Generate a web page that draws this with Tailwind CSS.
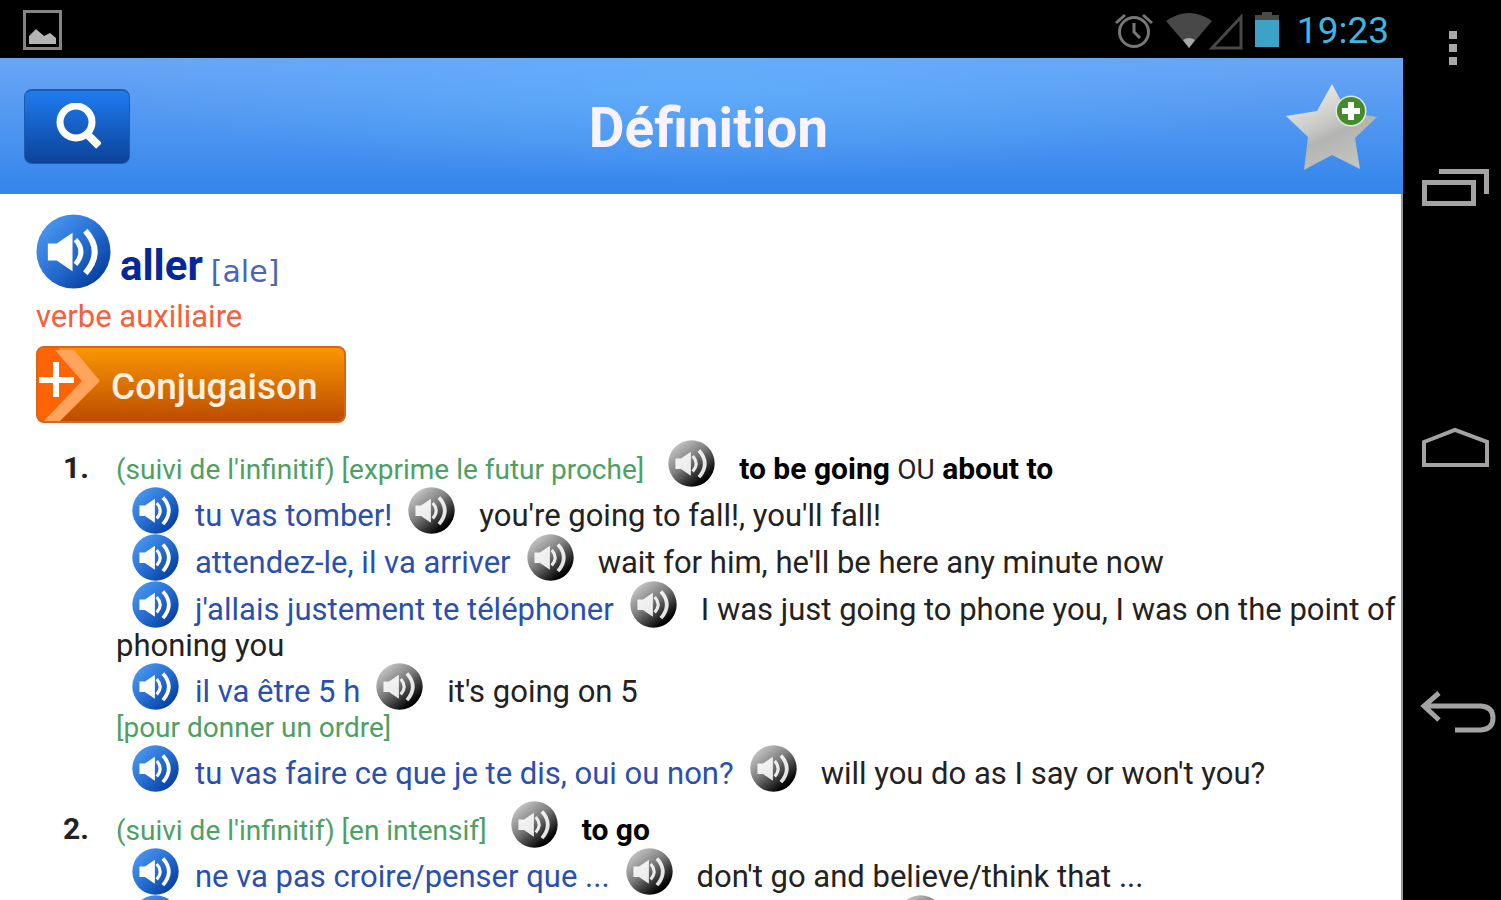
<!DOCTYPE html>
<html lang="fr">
<head>
<meta charset="utf-8">
<title>Définition</title>
<script src="https://cdn.jsdelivr.net/npm/@tailwindcss/browser@4"></script>
</head>
<body class="flex h-screen overflow-hidden bg-black font-['Roboto',sans-serif]">
<svg width="0" height="0" class="absolute" aria-hidden="true">
  <defs>
    <linearGradient id="blue" x1="0.1" y1="0.1" x2="0.9" y2="0.9"><stop offset="0" stop-color="#4a98f0"/><stop offset="0.45" stop-color="#2a72d6"/><stop offset="1" stop-color="#023c9c"/></linearGradient>
    <linearGradient id="gray" x1="0.15" y1="0.1" x2="0.8" y2="0.9"><stop offset="0" stop-color="#c6c6c6"/><stop offset="0.45" stop-color="#7c7c7c"/><stop offset="0.95" stop-color="#000"/></linearGradient>
    <linearGradient id="silver" x1="0.2" y1="0" x2="0.7" y2="1"><stop offset="0" stop-color="#f2f2ee"/><stop offset="0.45" stop-color="#c8c8c6"/><stop offset="0.6" stop-color="#b4b4b2"/><stop offset="1" stop-color="#c4c4c0"/></linearGradient>
    <symbol id="waves" viewBox="0 0 76 76">
      <path d="M12 30h9l16-11v39L21 47h-9z" fill="#fff"/>
      <path d="M40 26q11 12 0 25" fill="none" stroke="#fff" stroke-width="5"/>
      <path d="M50 17q19 21 0 43" fill="none" stroke="#fff" stroke-width="6"/>
    </symbol>
    <symbol id="say-blue" viewBox="0 0 76 76"><circle cx="38" cy="38" r="37.5" fill="url(#blue)"/><use href="#waves"/></symbol>
    <symbol id="say-gray" viewBox="0 0 76 76"><circle cx="38" cy="38" r="37.5" fill="url(#gray)"/><use href="#waves" opacity="0.88"/></symbol>
  </defs>
</svg>

<div class="flex min-w-0 flex-1 flex-col">
  <div class="flex h-[58px] shrink-0 items-center bg-black pt-1 pr-[14px] pl-[22px]">
    <svg class="size-[42px]" viewBox="0 0 42 42"><rect x="2.500" y="1.500" width="36" height="37" fill="none" stroke="#858585" stroke-width="3"/><path d="M7 34v-8l7-7 8 7 6-3 6 5v6z" fill="#b4b4b4"/></svg>
    <svg class="ml-auto h-10 w-[40px]" viewBox="0 0 40 40" fill="none" stroke="#777" stroke-width="3"><circle cx="20" cy="21" r="14.500"/><path d="M20 12v9l6 6M2 12l9-8M38 12l-9-8"/></svg>
    <svg class="ml-3 h-10 w-[80px]" viewBox="0 0 80 40"><path d="M0 10q23-16 46 0L23 37z" fill="#484848"/><path d="M17 29q6-4 12 0l-6 8z" fill="#a8a8a8"/><path d="M46 37L75 6v31z" fill="none" stroke="#484848" stroke-width="3"/></svg>
    <svg class="ml-[9px] h-10 w-6" viewBox="0 0 24 40"><path d="M0 9V4h7V1h10v3h7v5z" fill="#4a4a4a"/><path d="M0 9h24v27H0z" fill="#3da2c8"/></svg>
    <time class="ml-[18px] text-[37px] leading-10 text-[#3fb5e2]">19:23</time>
  </div>

  <header class="grid h-[136px] shrink-0 grid-cols-[1fr_auto_1fr] items-center bg-[radial-gradient(ellipse_at_50%_20%,#62b4ff99,transparent_60%),linear-gradient(#69a6f5,#3385ec)] pr-[26px] pl-6">
    <button aria-label="Rechercher" class="flex h-[75px] w-[106px] items-center justify-center justify-self-start rounded-lg border border-t-2 border-[#1c5cae] bg-linear-to-b from-[#1f7cf0] to-[#0d439a]">
      <svg class="size-12" viewBox="0 0 48 48" fill="none" stroke="#fff"><circle cx="23" cy="19" r="16" stroke-width="7"/><path d="M33 30l13 13" stroke-width="8"/></svg>
    </button>
    <h1 class="pt-1 pl-4 text-[55px] leading-16 font-bold text-[#faf3ff]">Définition</h1>
    <button aria-label="Ajouter aux favoris" class="justify-self-end">
      <svg class="h-[90px] w-[92px]" viewBox="0 0 92 90"><path d="M47 3l15 28 30 5-22 21 5 31-28-14-28 15 4-33L1 35l31-5z" fill="url(#silver)"/><circle cx="66" cy="30" r="15.500" fill="#e2eadf"/><circle cx="66" cy="30" r="14" fill="#458b2c"/><path d="M66 21v18M57 30h18" stroke="#fff" stroke-width="6"/></svg>
    </button>
  </header>

  <main class="min-h-0 flex-1 overflow-hidden border-r-2 border-[#999] bg-white pt-5 pl-9 text-[31px] leading-[35px] text-[#222]">
    <div class="flex items-start">
      <button aria-label="Écouter aller"><svg class="size-[75px]"><use href="#say-blue"/></svg></button>
      <h2 class="ml-[9px] pt-7 text-[42px] leading-12 font-bold text-[#06279a]">aller</h2>
      <span class="ml-2 pt-10 font-['DejaVu_Sans',sans-serif] text-[30px] text-[#4a66b4]">[ale]</span>
    </div>
    <p class="mt-[9px] text-[#f4603c]">verbe auxiliaire</p>
    <button class="mt-3 flex h-[77px] w-[310px] items-center overflow-hidden rounded-lg border-2 border-[#d9641c] bg-linear-to-b from-[#fa9600] to-[#bd4c00] text-[37px] font-medium text-[#fff0e2]">
      <svg class="h-[77px] w-[64px] shrink-0" viewBox="0 0 64 77"><path d="M0 0h19l26 36L6 77H0z" fill="#fe6304"/><path d="M17 4h19l26 31-42 42H4l40-42z" fill="#ffa45c"/><path d="M18 16v35M1 34h35" stroke="#fff" stroke-width="6"/></svg>
      <span class="ml-[9px] pt-1">Conjugaison</span>
    </button>

    <ol class="mt-[17px] flex flex-col gap-[9px]">
      <li class="grid grid-cols-[53px_1fr] gap-x-[27px]">
        <span class="pt-[10px] text-right text-[30px] font-bold">1.</span>
        <div>
          <p><span class="text-[28px] text-[#4da062]">(suivi de l'infinitif) [exprime le futur proche]</span><button aria-label="Écouter" class="mr-6 ml-6 inline-block align-[-8px]"><svg class="size-[47px]"><use href="#say-gray"/></svg></button><span class="text-[30px]"><b class="text-black">to be going</b> <span class="text-[28px]">OU</span> <b class="text-black">about to</b></span></p>
          <p><button aria-label="Écouter" class="mr-4 ml-4 inline-block align-[-8px]"><svg class="size-[47px]"><use href="#say-blue"/></svg></button><span class="text-[#2a4fae]">tu vas tomber!</span><button aria-label="Écouter" class="mr-6 ml-4 inline-block align-[-8px]"><svg class="size-[47px]"><use href="#say-gray"/></svg></button>you're going to fall!, you'll fall!</p>
          <p><button aria-label="Écouter" class="mr-4 ml-4 inline-block align-[-8px]"><svg class="size-[47px]"><use href="#say-blue"/></svg></button><span class="text-[#2a4fae]">attendez-le, il va arriver</span><button aria-label="Écouter" class="mr-6 ml-4 inline-block align-[-8px]"><svg class="size-[47px]"><use href="#say-gray"/></svg></button>wait for him, he'll be here any minute now</p>
          <p><button aria-label="Écouter" class="mr-4 ml-4 inline-block align-[-8px]"><svg class="size-[47px]"><use href="#say-blue"/></svg></button><span class="text-[#2a4fae]">j'allais justement te téléphoner</span><button aria-label="Écouter" class="mr-6 ml-4 inline-block align-[-8px]"><svg class="size-[47px]"><use href="#say-gray"/></svg></button>I was just going to phone you, I was on the point of phoning you</p>
          <p><button aria-label="Écouter" class="mr-4 ml-4 inline-block align-[-8px]"><svg class="size-[47px]"><use href="#say-blue"/></svg></button><span class="text-[#2a4fae]">il va être 5 h</span><button aria-label="Écouter" class="mr-6 ml-4 inline-block align-[-8px]"><svg class="size-[47px]"><use href="#say-gray"/></svg></button>it's going on 5</p>
          <p class="text-[28px] text-[#4da062]">[pour donner un ordre]</p>
          <p><button aria-label="Écouter" class="mr-4 ml-4 inline-block align-[-8px]"><svg class="size-[47px]"><use href="#say-blue"/></svg></button><span class="text-[#2a4fae]">tu vas faire ce que je te dis, oui ou non?</span><button aria-label="Écouter" class="mr-6 ml-4 inline-block align-[-8px]"><svg class="size-[47px]"><use href="#say-gray"/></svg></button>will you do as I say or won't you?</p>
        </div>
      </li>
      <li class="grid grid-cols-[53px_1fr] gap-x-[27px]">
        <span class="pt-[10px] text-right text-[30px] font-bold">2.</span>
        <div>
          <p><span class="text-[28px] text-[#4da062]">(suivi de l'infinitif) [en intensif]</span><button aria-label="Écouter" class="mr-6 ml-6 inline-block align-[-8px]"><svg class="size-[47px]"><use href="#say-gray"/></svg></button><b class="text-[30px] text-black">to go</b></p>
          <p><button aria-label="Écouter" class="mr-4 ml-4 inline-block align-[-8px]"><svg class="size-[47px]"><use href="#say-blue"/></svg></button><span class="text-[#2a4fae]">ne va pas croire/penser que ...</span><button aria-label="Écouter" class="mr-6 ml-4 inline-block align-[-8px]"><svg class="size-[47px]"><use href="#say-gray"/></svg></button>don't go and believe/think that ...</p>
          <p class="flex gap-[718px] pl-4"><button aria-label="Écouter"><svg class="size-[47px]"><use href="#say-blue"/></svg></button><button aria-label="Écouter"><svg class="size-[47px]"><use href="#say-gray"/></svg></button></p>
        </div>
      </li>
    </ol>
  </main>
</div>

<nav aria-label="Système" class="flex w-[98px] shrink-0 flex-col items-center bg-black pt-[30px]">
  <button aria-label="Menu"><svg class="h-9 w-[98px]" viewBox="0 0 98 36" fill="#a8a8a8"><path d="M46 1h8v8h-8zM46 14h8v8h-8zM46 27h8v8h-8z"/></svg></button>
  <button aria-label="Applications récentes" class="mt-[102px]"><svg class="h-10 w-[98px]" viewBox="0 0 98 40" fill="none" stroke="#a3a3a3" stroke-width="5"><path d="M21.500 14.500h49v21h-49zM36 3.500h47.500V26"/></svg></button>
  <button aria-label="Accueil" class="mt-[218px]"><svg class="h-[44px] w-[98px]" viewBox="0 0 98 44" fill="none" stroke="#a3a3a3" stroke-width="4"><path d="M21 39V16L52 4l32 12v23z"/></svg></button>
  <button aria-label="Retour" class="mt-[220px]"><svg class="h-[46px] w-[98px]" viewBox="0 0 98 46" fill="none" stroke="#a3a3a3" stroke-width="5"><path d="M36 3L21 16l15 14M22 16h56q12 1 12 12t-12 12H52"/></svg></button>
</nav>
</body>
</html>
